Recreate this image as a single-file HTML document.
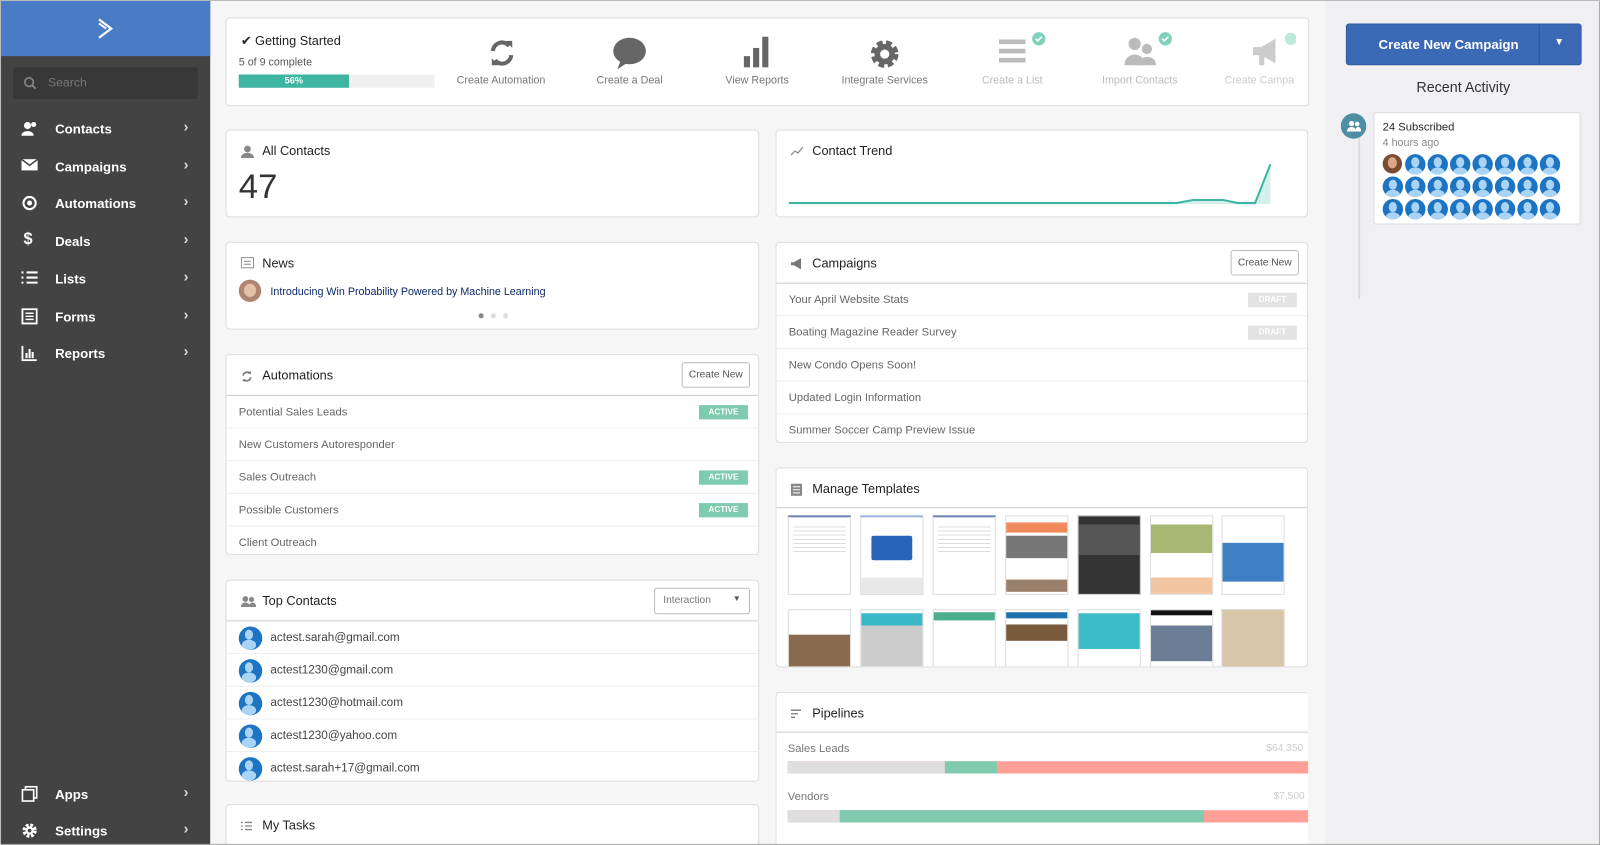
<!DOCTYPE html>
<html><head><meta charset="utf-8"><style>
*{box-sizing:border-box;margin:0;padding:0}
html,body{width:1600px;height:845px;overflow:hidden;background:#f5f5f5}
body{font-family:"Liberation Sans",sans-serif;color:#333}
#w{position:absolute;left:0;top:0;width:1568px;height:828px;transform:scale(1.0204);transform-origin:0 0;background:#f6f6f6;overflow:hidden;border-top:1px solid #bbb;border-left:1px solid #bbb}
.a{position:absolute}
#sb{left:0;top:0;width:205px;height:828px;background:#434343}
#logo{left:0;top:0;width:205px;height:54px;background:#4a7cc6}
.nav{position:absolute;left:0;width:205px;height:30px;color:#fff;font-size:13px;font-weight:bold}
.nav .t{position:absolute;left:53px;top:7px}
.nav .c{position:absolute;left:179px;top:4px;font-size:14px;color:#ddd}
.nav svg{position:absolute;left:20px;top:6px}
.card{position:absolute;background:#fff;border:1px solid #ddd;border-radius:4px;overflow:hidden}
.hd{position:absolute;left:35px;top:13px;font-size:12.5px;color:#222}
.ic{position:absolute;left:14px;top:14px}
.row{position:absolute;left:0;right:0;height:32px;border-top:1px solid #eee;font-size:11px;color:#666;padding:10px 12px}
.bd{position:absolute;right:10px;top:9px;width:48px;height:14px;font-size:8px;color:#fff;text-align:center;line-height:14px;font-weight:bold}
.act{background:#7fcbb0}.dr{background:#e3e3e3}
.btn{position:absolute;border:1px solid #bbb;border-radius:3px;font-size:10px;color:#555;background:#fff;text-align:center}
.gi{position:absolute;top:55px;font-size:10.5px;color:#777;text-align:center;width:120px}
.av{position:absolute;width:20px;height:20px;border-radius:50%;background:#1d74c2;overflow:hidden}
.av:before{content:"";position:absolute;left:6px;top:3px;width:8px;height:10px;border-radius:50%;background:#a9d4f5}
.av:after{content:"";position:absolute;left:3px;top:13px;width:14px;height:10px;border-radius:50%;background:#a9d4f5}
.th{position:absolute;width:62px;border:1px solid #ddd;background:#fff;overflow:hidden}
</style></head><body><div id="w">
<div id="sb" class="a">
<div id="logo" class="a"><svg class="a" style="left:93px;top:16px" width="18" height="22" viewBox="0 0 18 22"><path d="M3 2 L15 11 L3 20" stroke="#fff" stroke-width="2.2" fill="none"/><path d="M3 6 L10 11" stroke="#fff" stroke-width="2"/></svg></div>
<div class="a" style="left:12px;top:65px;width:181px;height:31px;background:#383838;border-radius:2px"><svg class="a" style="left:10px;top:9px" width="13" height="13"><circle cx="5.5" cy="5.5" r="4.2" stroke="#888" stroke-width="1.6" fill="none"/><path d="M8.5 8.5L12 12" stroke="#888" stroke-width="1.8"/></svg><span class="a" style="left:34px;top:8px;font-size:12px;color:#777">Search</span></div>
<div class="nav" style="top:111px"><svg width="16" height="16"><circle cx="6" cy="5" r="3.5" fill="#fff"/><path d="M0 15c0-6 12-6 12 0z" fill="#fff"/><circle cx="12" cy="4" r="2.5" fill="#fff"/></svg><span class="t">Contacts</span><span class="c">›</span></div>
<div class="nav" style="top:148px"><svg width="16" height="14"><rect x="0" y="1" width="16" height="11" fill="#fff"/><path d="M0 1l8 6 8-6" stroke="#434343" stroke-width="1.5" fill="none"/></svg><span class="t">Campaigns</span><span class="c">›</span></div>
<div class="nav" style="top:184px"><svg width="16" height="16"><circle cx="8" cy="8" r="6" stroke="#fff" stroke-width="2" fill="none"/><circle cx="8" cy="8" r="2.5" fill="#fff"/></svg><span class="t">Automations</span><span class="c">›</span></div>
<div class="nav" style="top:221px"><span class="a" style="left:22px;top:4px;font-size:16px">$</span><span class="t">Deals</span><span class="c">›</span></div>
<div class="nav" style="top:258px"><svg width="16" height="14"><path d="M0 2h2M5 2h11M0 7h2M5 7h11M0 12h2M5 12h11" stroke="#fff" stroke-width="2"/></svg><span class="t">Lists</span><span class="c">›</span></div>
<div class="nav" style="top:295px"><svg width="16" height="16"><rect x="1" y="1" width="14" height="14" stroke="#fff" stroke-width="1.8" fill="none"/><path d="M4 5h8M4 8h8M4 11h8" stroke="#fff" stroke-width="1.4"/></svg><span class="t">Forms</span><span class="c">›</span></div>
<div class="nav" style="top:331px"><svg width="16" height="16"><path d="M1 1v14h14" stroke="#fff" stroke-width="1.8" fill="none"/><path d="M5 13V8M8 13V4M11 13V7" stroke="#fff" stroke-width="2"/></svg><span class="t">Reports</span><span class="c">›</span></div>
<div class="nav" style="top:763px"><svg width="16" height="16"><rect x="4" y="1" width="11" height="11" stroke="#fff" stroke-width="1.6" fill="none"/><rect x="1" y="4" width="11" height="11" stroke="#fff" stroke-width="1.6" fill="#434343"/></svg><span class="t">Apps</span><span class="c">›</span></div>
<div class="nav" style="top:799px"><svg width="16" height="16"><circle cx="8" cy="8" r="5" stroke="#fff" stroke-width="4" stroke-dasharray="2.5 1.5" fill="none"/><circle cx="8" cy="8" r="4" fill="#fff"/><circle cx="8" cy="8" r="1.8" fill="#434343"/></svg><span class="t">Settings</span><span class="c">›</span></div>
</div>

<div class="card" style="left:220px;top:16px;width:1062px;height:87px">
<div class="a" style="left:14px;top:14px;font-size:12.5px;color:#222">✔ Getting Started</div>
<div class="a" style="left:12px;top:37px;font-size:10.5px;color:#555">5 of 9 complete</div>
<div class="a" style="left:12px;top:55px;width:192px;height:13px;background:#f0f0f0"><div style="width:108px;height:13px;background:#3db5a0;color:#fff;font-size:9px;text-align:center;line-height:13px;font-weight:bold">56%</div></div>
<svg class="a" style="left:255px;top:19px" width="30" height="30" viewBox="0 0 30 30"><path d="M6 13a9 9 0 0 1 16-5" stroke="#666" stroke-width="4" fill="none"/><path d="M19 3l6 0 0 7z" fill="#666"/><path d="M24 17a9 9 0 0 1-16 5" stroke="#666" stroke-width="4" fill="none"/><path d="M11 27l-6 0 0-7z" fill="#666"/></svg>
<div class="gi" style="left:209px">Create Automation</div>
<svg class="a" style="left:378px;top:18px" width="34" height="34"><ellipse cx="17" cy="14" rx="16" ry="13" fill="#666"/><path d="M8 24l-3 8 9-6z" fill="#666"/></svg>
<div class="gi" style="left:335px">Create a Deal</div>
<svg class="a" style="left:506px;top:17px" width="28" height="32"><rect x="1" y="20" width="6" height="11" fill="#666"/><rect x="10" y="12" width="6" height="19" fill="#666"/><rect x="19" y="1" width="6" height="30" fill="#666"/></svg>
<div class="gi" style="left:460px">View Reports</div>
<svg class="a" style="left:630px;top:20px" width="30" height="30" viewBox="0 0 30 30"><circle cx="15" cy="15" r="10" stroke="#666" stroke-width="7" stroke-dasharray="5 3" fill="none"/><circle cx="15" cy="15" r="10" fill="#666"/><circle cx="15" cy="15" r="4.5" fill="#fff"/></svg>
<div class="gi" style="left:585px">Integrate Services</div>
<svg class="a" style="left:756px;top:12px" width="50" height="36"><path d="M1 11h26M1 20h26M1 29h26" stroke="#bbb" stroke-width="4.5"/><circle cx="40" cy="8" r="6.5" fill="#7fd1bc"/><path d="M37 8l2 2 4-4" stroke="#fff" stroke-width="1.6" fill="none"/></svg>
<div class="gi" style="left:710px;color:#bbb">Create a List</div>
<svg class="a" style="left:878px;top:12px" width="50" height="38"><circle cx="12" cy="13" r="6" fill="#bbb"/><path d="M2 34c0-14 20-14 20 0z" fill="#bbb"/><circle cx="24" cy="18" r="5" fill="#bbb"/><path d="M16 34c0-11 17-11 17 0z" fill="#bbb"/><circle cx="42" cy="8" r="6.5" fill="#7fd1bc"/><path d="M39 8l2 2 4-4" stroke="#fff" stroke-width="1.6" fill="none"/></svg>
<div class="gi" style="left:835px;color:#bbb">Import Contacts</div>
<svg class="a" style="left:1004px;top:14px" width="44" height="36"><path d="M2 14h8l14-8v24l-14-8H2z" fill="#ccc"/><rect x="8" y="22" width="5" height="10" fill="#ccc"/><circle cx="39" cy="6" r="6" fill="#bde8dc"/></svg>
<div class="gi" style="left:958px;color:#ccc;width:90px;text-align:left;padding-left:20px">Create Campa</div>
</div>

<div class="card" style="left:220px;top:126px;width:523px;height:86px">
<svg class="ic" width="13" height="13"><circle cx="6.5" cy="4" r="3.3" fill="#888"/><path d="M0 13c0-7 13-7 13 0z" fill="#888"/></svg>
<div class="hd">All Contacts</div>
<div class="a" style="left:12px;top:36px;font-size:34px;color:#333">47</div>
</div>
<div class="card" style="left:759px;top:126px;width:522px;height:86px">
<svg class="ic" width="12" height="12"><path d="M0 10l4-4 3 2 5-6" stroke="#888" stroke-width="1.2" fill="none"/></svg>
<div class="hd">Contact Trend</div>
<svg class="a" style="left:12px;top:30px" width="490" height="45"><path d="M380 40l16-2h30l14 2h17l15-39v41h-92z" fill="#d5f0ea"/><path d="M0 41h380l16-3h30l14 3h17l15-38" stroke="#3db5a0" stroke-width="2" fill="none"/></svg>
</div>
<div class="card" style="left:220px;top:236px;width:523px;height:86px">
<svg class="ic" width="13" height="11"><rect x="0.5" y="0.5" width="12" height="10" stroke="#888" fill="none"/><path d="M3 4h7M3 7h7" stroke="#888"/></svg>
<div class="hd">News</div>
<div class="a" style="left:12px;top:36px;width:22px;height:22px;border-radius:50%;background:#b08570;overflow:hidden"><div style="position:absolute;left:5px;top:4px;width:12px;height:13px;border-radius:50%;background:#e2bfa6"></div></div>
<div class="a" style="left:43px;top:42px;font-size:10.5px;color:#0b2a6b">Introducing Win Probability Powered by Machine Learning</div>
<div class="a" style="left:247px;top:69px;width:5px;height:5px;border-radius:50%;background:#888"></div>
<div class="a" style="left:259px;top:69px;width:5px;height:5px;border-radius:50%;background:#ddd"></div>
<div class="a" style="left:271px;top:69px;width:5px;height:5px;border-radius:50%;background:#ddd"></div>
</div>
<div class="card" style="left:220px;top:346px;width:523px;height:197px">
<svg class="ic" style="top:15px" width="12" height="12" viewBox="0 0 30 30"><path d="M6 13a9 9 0 0 1 16-5" stroke="#777" stroke-width="4" fill="none"/><path d="M19 3l6 0 0 7z" fill="#777"/><path d="M24 17a9 9 0 0 1-16 5" stroke="#777" stroke-width="4" fill="none"/><path d="M11 27l-6 0 0-7z" fill="#777"/></svg>
<div class="hd">Automations</div>
<div class="btn" style="right:8px;top:7px;width:67px;height:25px;line-height:23px">Create New</div>
<div class="row" style="top:39px;border-top-color:#ccc">Potential Sales Leads<span class="bd act">ACTIVE</span></div>
<div class="row" style="top:71px">New Customers Autoresponder</div>
<div class="row" style="top:103px">Sales Outreach<span class="bd act">ACTIVE</span></div>
<div class="row" style="top:135px">Possible Customers<span class="bd act">ACTIVE</span></div>
<div class="row" style="top:167px">Client Outreach</div>
</div>
<div class="card" style="left:220px;top:567px;width:523px;height:198px">
<svg class="ic" style="top:15px" width="15" height="11"><circle cx="4.5" cy="3" r="2.8" fill="#888"/><path d="M0 11c0-6 9-6 9 0z" fill="#888"/><circle cx="10.5" cy="3.5" r="2.5" fill="#888"/><path d="M8 11c0-6 7-6 7 0z" fill="#888"/></svg>
<div class="hd">Top Contacts</div>
<div class="btn" style="right:8px;top:7px;width:94px;height:26px;text-align:left;padding:6px 8px;color:#777">Interaction<span style="position:absolute;right:8px;top:5px;font-size:8px;color:#555">▼</span></div>
<div class="row" style="top:39px;border-top-color:#ccc;font-size:11.5px;color:#444;padding-left:43px">actest.sarah@gmail.com<div class="av" style="left:12px;top:5px;width:23px;height:23px"></div></div>
<div class="row" style="top:71px;font-size:11.5px;color:#444;padding-left:43px">actest1230@gmail.com<div class="av" style="left:12px;top:5px;width:23px;height:23px"></div></div>
<div class="row" style="top:103px;font-size:11.5px;color:#444;padding-left:43px">actest1230@hotmail.com<div class="av" style="left:12px;top:5px;width:23px;height:23px"></div></div>
<div class="row" style="top:135px;font-size:11.5px;color:#444;padding-left:43px">actest1230@yahoo.com<div class="av" style="left:12px;top:5px;width:23px;height:23px"></div></div>
<div class="row" style="top:167px;font-size:11.5px;color:#444;padding-left:43px">actest.sarah+17@gmail.com<div class="av" style="left:12px;top:5px;width:23px;height:23px"></div></div>
</div>
<div class="card" style="left:220px;top:787px;width:523px;height:60px">
<svg class="ic" style="top:16px" width="11" height="9"><path d="M0 1h2M4 1h7M0 4.5h2M4 4.5h7M0 8h2M4 8h7" stroke="#888" stroke-width="1.3"/></svg>
<div class="hd">My Tasks</div>
</div>
<div class="card" style="left:759px;top:236px;width:522px;height:197px">
<svg class="ic" style="top:15px" width="13" height="11"><path d="M0 4h3l7-4v11l-7-4H0z" fill="#777"/></svg>
<div class="hd">Campaigns</div>
<div class="btn" style="right:8px;top:7px;width:67px;height:25px;line-height:23px">Create New</div>
<div class="row" style="top:39px;border-top-color:#ccc">Your April Website Stats<span class="bd dr">DRAFT</span></div>
<div class="row" style="top:71px">Boating Magazine Reader Survey<span class="bd dr">DRAFT</span></div>
<div class="row" style="top:103px">New Condo Opens Soon!</div>
<div class="row" style="top:135px">Updated Login Information</div>
<div class="row" style="top:167px">Summer Soccer Camp Preview Issue</div>
</div>
<div class="card" style="left:759px;top:457px;width:522px;height:196px">
<svg class="ic" style="top:15px" width="11" height="12"><rect x="0" y="0" width="11" height="12" fill="#888"/><path d="M2 3h7M2 6h7M2 9h7" stroke="#fff"/></svg>
<div class="hd">Manage Templates</div>
<div class="a" style="left:0;right:0;top:38px;border-top:1px solid #ccc"></div>
<div class="th" style="left:11px;top:46px;height:78px;border-top:2px solid #6c86b8"><div style="margin:6px 4px;height:30px;background:repeating-linear-gradient(#fff 0 3px,#ddd 3px 4px)"></div></div>
<div class="th" style="left:82px;top:46px;height:78px;border-top:2px solid #9bb5dd"><div style="margin:18px 10px 0;height:24px;background:#2a64b8;border-radius:2px"></div><div style="position:absolute;left:0;right:0;bottom:0;height:16px;background:#e8e8e8"></div></div>
<div class="th" style="left:153px;top:46px;height:78px;border-top:2px solid #6c86b8"><div style="margin:6px 4px;height:30px;background:repeating-linear-gradient(#fff 0 3px,#ddd 3px 4px)"></div></div>
<div class="th" style="left:224px;top:46px;height:78px"><div style="margin-top:6px;height:10px;background:#f08a5d"></div><div style="margin:3px 0;height:22px;background:#777"></div><div style="position:absolute;bottom:2px;left:0;right:0;height:12px;background:#9a806a"></div></div>
<div class="th" style="left:295px;top:46px;height:78px;background:#333"><div style="margin-top:8px;height:30px;background:#555"></div></div>
<div class="th" style="left:366px;top:46px;height:78px"><div style="margin-top:8px;height:28px;background:#a9b875"></div><div style="position:absolute;bottom:0;left:0;right:0;height:16px;background:#f2c4a0"></div></div>
<div class="th" style="left:436px;top:46px;height:78px"><div style="margin-top:26px;height:38px;background:#3f7fc4"></div></div>
<div class="th" style="left:11px;top:138px;height:60px"><div style="margin-top:24px;height:36px;background:#8a6a4f"></div></div>
<div class="th" style="left:82px;top:138px;height:60px"><div style="margin-top:3px;height:12px;background:#3ab8c8"></div><div style="height:40px;background:#ccc"></div></div>
<div class="th" style="left:153px;top:138px;height:60px"><div style="margin-top:2px;height:8px;background:#4bae8c"></div></div>
<div class="th" style="left:224px;top:138px;height:60px"><div style="margin-top:2px;height:6px;background:#1f72b0"></div><div style="margin-top:6px;height:16px;background:#7a5a3d"></div></div>
<div class="th" style="left:295px;top:138px;height:60px;background:#fff"><div style="margin-top:3px;height:35px;background:#3bbcc8"></div></div>
<div class="th" style="left:366px;top:138px;height:60px"><div style="height:5px;background:#111"></div><div style="margin-top:10px;height:35px;background:#6b7e96"></div></div>
<div class="th" style="left:436px;top:138px;height:60px;background:#d8c6a8"></div>
</div>
<div class="card" style="left:759px;top:677px;width:522px;height:170px;border-right:none">
<svg class="ic" style="top:16px" width="11" height="9"><path d="M0 1h10M0 4.5h7M0 8h4" stroke="#777" stroke-width="1.3"/></svg>
<div class="hd">Pipelines</div>
<div class="a" style="left:0;right:0;top:38px;border-top:1px solid #ccc"></div>
<div class="a" style="left:11px;top:49px;font-size:11px;color:#777">Sales Leads</div>
<div class="a" style="left:480px;top:49px;font-size:10px;color:#ccc">$64,350</div>
<div class="a" style="left:11px;top:67px;width:511px;height:12px;background:#ff9f97"><div style="width:154px;height:12px;background:#dededf;float:left"></div><div style="width:51px;height:12px;background:#80cbb0;float:left"></div></div>
<div class="a" style="left:11px;top:96px;font-size:11px;color:#777">Vendors</div>
<div class="a" style="left:487px;top:96px;font-size:10px;color:#ccc">$7,500</div>
<div class="a" style="left:11px;top:115px;width:511px;height:12px;background:#ff9f97"><div style="width:51px;height:12px;background:#dededf;float:left"></div><div style="width:357px;height:12px;background:#80cbb0;float:left"></div></div>
</div>

<div class="a" style="left:1298px;top:0;width:270px;height:828px;background:#f0eff1;border-right:2px solid #aaa"></div>
<div class="a" style="left:1318px;top:22px;width:231px;height:41px;background:#3c69b5;border-radius:3px;border:1px solid #2f5aa0">
<span class="a" style="left:31px;top:12px;color:#fff;font-size:13px;font-weight:bold">Create New Campaign</span>
<div class="a" style="left:188px;top:0;width:1px;height:39px;background:#2d579c"></div>
<span class="a" style="left:203px;top:12px;color:#fff;font-size:10px">▼</span></div>
<div class="a" style="left:1298px;top:76px;width:270px;text-align:center;font-size:14px;color:#333">Recent Activity</div>
<div class="a" style="left:1330px;top:130px;width:2px;height:162px;background:#ddd"></div>
<div class="a" style="left:1313px;top:110px;width:25px;height:25px;border-radius:50%;background:#4e8ea4"><svg class="a" style="left:6px;top:7px" width="14" height="11"><circle cx="4.5" cy="3" r="2.6" fill="#fff"/><path d="M0 11c0-6 9-6 9 0z" fill="#fff"/><circle cx="10" cy="3.5" r="2.3" fill="#fff"/><path d="M8 11c0-6 6-6 6 0z" fill="#fff"/></svg></div>
<div class="a" style="left:1345px;top:109px;width:203px;height:110px;background:#fff;border:1px solid #ddd;border-radius:2px">
<div class="a" style="left:8px;top:8px;font-size:11px;color:#222">24 Subscribed</div>
<div class="a" style="left:8px;top:23px;font-size:10.5px;color:#888">4 hours ago</div>
<div class="a" style="left:8px;top:40px;width:19px;height:19px;border-radius:50%;background:#7a4a32"><div style="position:absolute;left:5px;top:3px;width:9px;height:11px;border-radius:50%;background:#d9a68a"></div></div>
<div class="av" style="left:30px;top:40px"></div><div class="av" style="left:52px;top:40px"></div><div class="av" style="left:74px;top:40px"></div><div class="av" style="left:96px;top:40px"></div><div class="av" style="left:118px;top:40px"></div><div class="av" style="left:140px;top:40px"></div><div class="av" style="left:162px;top:40px"></div>
<div class="av" style="left:8px;top:62px"></div><div class="av" style="left:30px;top:62px"></div><div class="av" style="left:52px;top:62px"></div><div class="av" style="left:74px;top:62px"></div><div class="av" style="left:96px;top:62px"></div><div class="av" style="left:118px;top:62px"></div><div class="av" style="left:140px;top:62px"></div><div class="av" style="left:162px;top:62px"></div>
<div class="av" style="left:8px;top:84px"></div><div class="av" style="left:30px;top:84px"></div><div class="av" style="left:52px;top:84px"></div><div class="av" style="left:74px;top:84px"></div><div class="av" style="left:96px;top:84px"></div><div class="av" style="left:118px;top:84px"></div><div class="av" style="left:140px;top:84px"></div><div class="av" style="left:162px;top:84px"></div>
</div>
<div class="a" style="left:0;top:826px;width:1568px;height:2px;background:#aaa"></div>
</div></body></html>
